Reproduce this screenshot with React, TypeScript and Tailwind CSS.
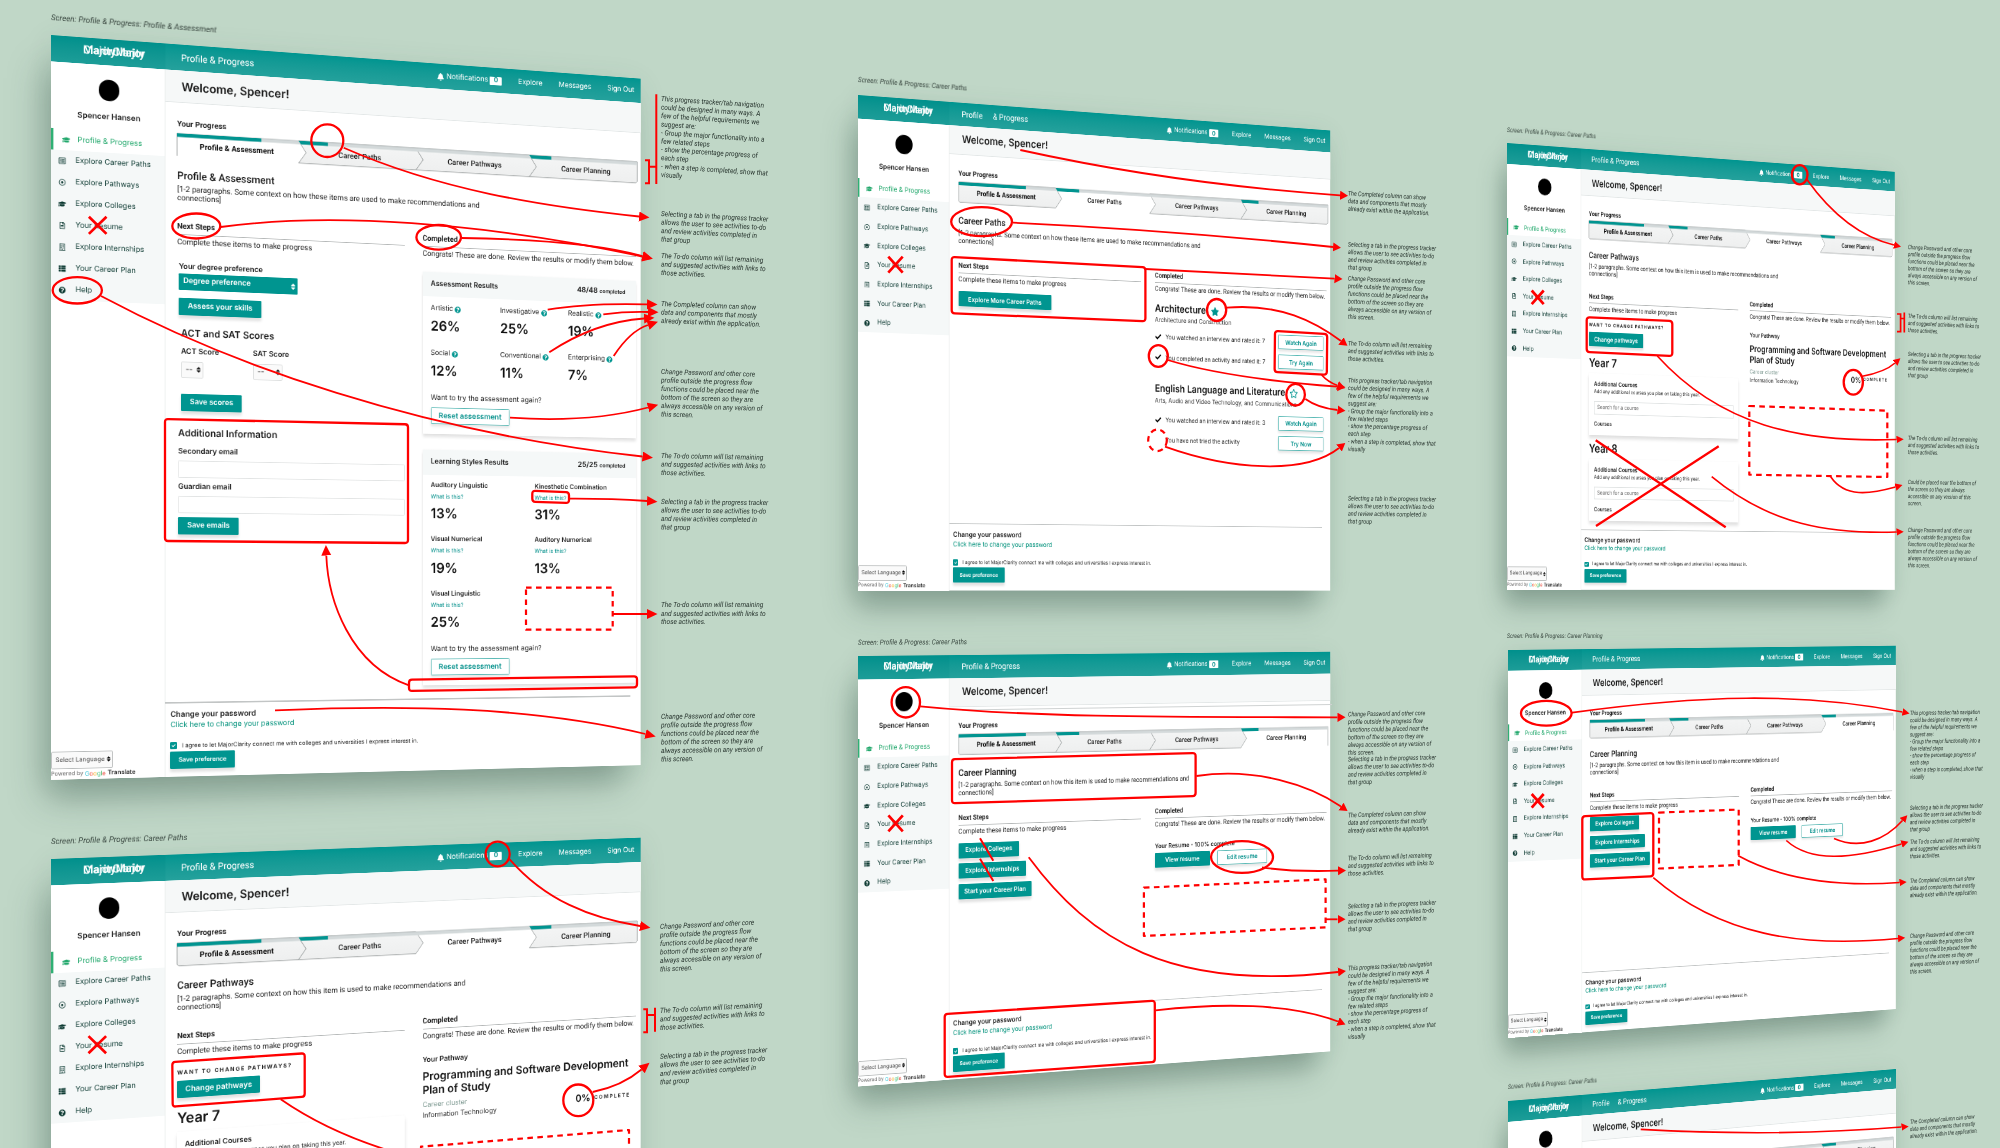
import React from "react";
import {
  FaBell,
  FaCheck,
  FaGraduationCap,
  FaQuestionCircle,
  FaRegBuilding,
  FaRegDotCircle,
  FaRegFileAlt,
  FaRegListAlt,
  FaRegStar,
  FaSort,
  FaStar,
  FaThList,
} from "react-icons/fa";

/* ---------- small building blocks ---------- */

type Kids = { children?: React.ReactNode };

function Solid({ children, className = "" }: Kids & { className?: string }) {
  return (
    <div
      className={
        "flex h-[17.4px] shrink-0 items-center justify-center rounded-[1px] bg-[#009590] pt-[0.5px] font-semibold whitespace-nowrap text-white shadow-[0_3px_3px_rgba(0,0,0,0.12)] " +
        className
      }
    >
      {children}
    </div>
  );
}

function Outline({ children, className = "" }: Kids & { className?: string }) {
  return (
    <div
      className={
        "flex h-[17.4px] shrink-0 items-center justify-center rounded-[1px] border border-[#5bbab6] bg-white pt-[0.5px] font-semibold whitespace-nowrap text-[#008f8a] shadow-[0_2px_3px_rgba(0,0,0,0.1)] " +
        className
      }
    >
      {children}
    </div>
  );
}

/* ---------- sidebar ---------- */

const navItems = [
  { label: "Explore Career Paths", Icon: FaRegListAlt },
  { label: "Explore Pathways", Icon: FaRegDotCircle },
  { label: "Explore Colleges", Icon: FaGraduationCap },
  { label: "Your Resume", Icon: FaRegFileAlt },
  { label: "Explore Internships", Icon: FaRegBuilding },
  { label: "Your Career Plan", Icon: FaThList },
  { label: "Help", Icon: FaQuestionCircle },
];

function Sidebar({ short }: { short?: boolean }) {
  return (
    <div className="flex w-[116px] shrink-0 flex-col border-r border-[#e9eceb] bg-white">
      <div className="flex h-[66.5px] flex-col items-center pt-[15px] pl-[1.5px]">
        <div className="h-[21.4px] w-[21.4px] rounded-full bg-black" />
        <div className="mt-[11.5px] text-[8px] leading-[10px] font-semibold text-[#1a1a1a]">Spencer Hansen</div>
      </div>
      <div className="flex h-[21.6px] items-center border-l-[2.4px] border-[#2fb074] pt-[1px] pl-[8.4px] text-[#22a86c]">
        <FaGraduationCap className="h-[8px] w-[8.6px]" />
        <span className="ml-[7.2px] text-[7.75px] leading-[10px]">Profile &amp; Progress</span>
      </div>
      <div className="bg-[#f5f8f8]">
        {navItems.map(({ label, Icon }) => (
          <div key={label} className="flex h-[21.55px] items-center pt-[0.8px] pl-[7.4px] text-[#0d3a32]">
            <Icon className="h-[7px] w-[8px]" />
            <span className="ml-[9px] text-[7.7px] leading-[10px] whitespace-nowrap">{label}</span>
          </div>
        ))}
      </div>
      {!short && (
        <>
          <div className="grow" />
          <div className="flex h-[17.6px] w-[62px] items-center justify-between rounded-[1.5px] border border-[#b9bcbc] bg-[#fafafa] pr-[1.5px] pl-[3.5px] text-[6.3px] whitespace-nowrap text-[#444]">
            Select Language
            <FaSort className="h-[7px] w-[4px] text-black" />
          </div>
          <div className="flex h-[11px] items-center text-[5.8px] whitespace-nowrap text-[#666]">
            Powered by
            <span className="ml-[1.6px] flex text-[6.2px]">
              <span className="text-[#35c5d8]">G</span>
              <span className="text-[#f0503c]">o</span>
              <span className="text-[#f7b529]">o</span>
              <span className="text-[#4bc78a]">g</span>
              <span className="text-[#34a853]">l</span>
              <span className="text-[#ea4335]">e</span>
            </span>
            <span className="ml-[2px] text-[6.3px] font-semibold text-[#333]">Translate</span>
          </div>
        </>
      )}
    </div>
  );
}

/* ---------- header ---------- */

function Header({ spaced }: { spaced?: boolean }) {
  return (
    <div className="flex h-[26px] shrink-0 text-white">
      <div className="grid w-[116px] place-items-center bg-linear-to-b from-[#00908c] to-[#1c9d98] pl-[11px]">
        <span className="col-start-1 row-start-1 font-['Roboto'] text-[11.5px] leading-none font-medium">
          MajorClarity
        </span>
        <span className="col-start-1 row-start-1 font-['Roboto'] text-[11.5px] leading-none font-medium">
          ClarityMajor
        </span>
      </div>
      <div className="flex grow items-center justify-between bg-linear-to-b from-[#009590] to-[#24a19c] pt-[1.5px] pr-[7.5px] pl-[16px]">
        <div className={"flex font-['Roboto'] text-[9.6px] " + (spaced ? "gap-[13px]" : "gap-[2.4px]")}>
          <span>Profile</span>
          <span>&amp; Progress</span>
        </div>
        <div className="flex items-center text-[7.8px]">
          <FaBell className="mr-[3px] h-[8px] w-[7.4px]" />
          Notifications
          <span className="ml-[2px] flex h-[9px] w-[13.5px] items-center justify-center rounded-[1px] bg-white text-[7.5px] font-bold text-[#008f8a]">
            0
          </span>
          <span className="ml-[18.5px]">Explore</span>
          <span className="ml-[18.5px]">Messages</span>
          <span className="ml-[18.5px]">Sign Out</span>
        </div>
      </div>
    </div>
  );
}

/* ---------- progress tabs ---------- */

const tabs = [
  { label: "Profile & Assessment", done: 88 },
  { label: "Career Paths", done: 31.5 },
  { label: "Career Pathways", done: 0 },
  { label: "Career Planning", done: 25 },
];

function Tabs({ active }: { active: number }) {
  const edge = [0, 127.5, 254.7, 381.8, 506.5];
  return (
    <div className="relative h-[23px] w-[506.5px]">
      <svg className="absolute inset-0 h-[23px] w-[506.5px] overflow-visible" viewBox="0 0 506.5 23">
        <defs>
          <linearGradient id="tabfill" x1="0" y1="0" x2="0" y2="1">
            <stop offset="0" stopColor="#f4f5f5" />
            <stop offset="1" stopColor="#eeefef" />
          </linearGradient>
        </defs>
        {tabs.map((t, i) => {
          const l = edge[i];
          const r = edge[i + 1];
          const right = i < 3 ? `L${r} 0 L${r + 8} 12 L${r} 23` : `L${r} 0 L${r} 21.5 L${r - 1.5} 23`;
          const left = i > 0 ? `L${l} 23 L${l + 8} 12 L${l} 0` : `L${l + 1.5} 23 L${l} 21.5 L${l} 0`;
          return i === active ? null : (
            <path key={t.label} d={`M${l} 0 ${right} ${left}Z`} fill="url(#tabfill)" stroke="#a3a7a7" strokeWidth="0.8" />
          );
        })}
        {active === 0 && <path d="M0 0V23" stroke="#a3a7a7" strokeWidth="0.8" />}
        {active === 3 && <path d="M506.5 0V23" stroke="#a3a7a7" strokeWidth="0.8" />}
        <path d="M0 0H506.5V3.5H0Z" fill="#d3d9da" />
        <path d="M0 0H506.5" stroke="#b4b9b9" strokeWidth="0.6" />
        {tabs.map((t, i) =>
          t.done ? (
            <path
              key={t.label}
              d={`M${edge[i]} 0 H${edge[i] + t.done} V3.6 H${edge[i] + (i ? 2.4 : 0)}Z`}
              fill="#019490"
            />
          ) : null,
        )}
      </svg>
      <div className="relative flex h-[23px] pt-[4px] font-['Roboto'] text-[8px] text-[#222]">
        {tabs.map((t, i) => (
          <div
            key={t.label}
            className={
              "flex w-[127.3px] items-center justify-center " +
              (i === 0 ? "pr-[2px] font-bold text-[#0a0a0a]" : "pl-[7px] font-medium")
            }
          >
            {t.label}
          </div>
        ))}
      </div>
    </div>
  );
}

/* ---------- columns content ---------- */

function SectionHead({ title, text }: { title: string; text: string }) {
  return (
    <div className="font-['Roboto'] text-[8px] leading-[10px] whitespace-nowrap">
      <div className="font-bold text-[#1a1a1a]">{title}</div>
      <div className="mt-[2.2px] h-[1px] bg-[#b5b8b8]" />
      <div className="mt-[2.8px] text-[#242424]">{text}</div>
    </div>
  );
}

function Field() {
  return <div className="h-[17px] rounded-[1px] border border-[#e2e4e4] bg-white" />;
}

function AssessmentLeft() {
  return (
    <div className="pl-[1px] text-[#1a1a1a]">
      <div className="mt-[15px] pl-[0.7px] text-[7.7px] leading-[10px] font-semibold">Your degree preference</div>
      <div className="mt-[1px] ml-[0.7px] flex h-[17px] w-[124.5px] items-center justify-between rounded-[1px] bg-[#009590] pr-[2px] pl-[4.6px] text-[7.8px] font-semibold text-white">
        Degree preference
        <FaSort className="h-[8px] w-[5px]" />
      </div>
      <Solid className="mt-[8.2px] ml-[0.7px] w-[86px] text-[7.8px]">Assess your skills</Solid>
      <div className="pl-[3px]">
        <div className="mt-[12px] text-[9.8px] leading-[12px] font-semibold">ACT and SAT Scores</div>
        <div className="mt-[9px] flex text-[7.7px] leading-[10px] font-semibold">
          <span className="w-[75px]">ACT Score</span>
          <span>SAT Score</span>
        </div>
        <div className="mt-[3.7px] flex">
          <div className="flex h-[17.4px] w-[23px] items-center justify-between rounded-[1.5px] border border-[#dcdede] bg-[#fafafa] pr-[1.6px] pl-[4px] text-[8px]">
            --
            <FaSort className="h-[8px] w-[4.6px]" />
          </div>
          <div className="ml-[52px] flex h-[17.4px] w-[31px] items-center justify-between rounded-[1.5px] border border-[#dcdede] bg-[#fafafa] pr-[1.6px] pl-[4px] text-[8px]">
            --
            <FaSort className="h-[8px] w-[4.6px]" />
          </div>
        </div>
        <Solid className="mt-[15.7px] w-[63.5px] text-[7.7px]">Save scores</Solid>
      </div>
      <div className="mt-[16.2px] text-[9.7px] leading-[12px] font-semibold">Additional Information</div>
      <div className="mt-[8.8px] text-[7.7px] leading-[10px] font-semibold">Secondary email</div>
      <div className="mt-[4px]">
        <Field />
      </div>
      <div className="mt-[5.4px] text-[7.7px] leading-[10px] font-semibold">Guardian email</div>
      <div className="mt-[3.6px]">
        <Field />
      </div>
      <Solid className="mt-[4.4px] w-[63px] text-[7.7px]">Save emails</Solid>
    </div>
  );
}

function ResultCard({ title, count, children, className = "" }: Kids & { title: string; count: string; className?: string }) {
  return (
    <div className={"bg-white shadow-[0_3px_3px_rgba(0,0,0,0.11),0_0_2px_rgba(0,0,0,0.05)] " + className}>
      <div className="flex h-[26px] items-center justify-between bg-[#f5f8f8] pr-[12px] pl-[9px] text-[#1a1a1a]">
        <span className="text-[7.7px] font-semibold">{title}</span>
        <span className="text-[8px] font-semibold">
          {count} <span className="text-[5.9px]">completed</span>
        </span>
      </div>
      <div className="pl-[9px]">{children}</div>
    </div>
  );
}

const interests = [
  ["Artistic", "26%"],
  ["Investigative", "25%"],
  ["Realistic", "19%"],
  ["Social", "12%"],
  ["Conventional", "11%"],
  ["Enterprising", "7%"],
];

const styles = [
  ["Auditory Linguistic", "13%"],
  ["Kinesthetic Combination", "31%"],
  ["Visual Numerical", "19%"],
  ["Auditory Numerical", "13%"],
  ["Visual Linguistic", "25%"],
];

function AssessmentRight() {
  return (
    <div>
      <ResultCard title="Assessment Results" count="48/48" className="mt-[13px] h-[170.8px]">
        <div className="grid grid-cols-[77.5px_77.5px_77.5px] gap-y-[16px] pt-[7.9px]">
          {interests.map(([name, value]) => (
            <div key={name}>
              <div className="flex items-center gap-[2px] text-[7.5px] leading-[10px] text-[#222]">
                {name}
                <FaQuestionCircle className="h-[7px] w-[7px] text-[#009590]" />
              </div>
              <div className="mt-[5.3px] text-[14.5px] leading-[16px] font-semibold text-[#101010]">{value}</div>
            </div>
          ))}
        </div>
        <div className="mt-[16px] text-[7.7px] leading-[10px] text-[#222]">Want to try the assessment again?</div>
        <Outline className="mt-[4.4px] w-[88px] text-[8px]">Reset assessment</Outline>
      </ResultCard>
      <ResultCard title="Learning Styles Results" count="25/25" className="mt-[17px] h-[248px]">
        <div className="grid grid-cols-[116.6px_116px] gap-y-[14.3px] pt-[6.2px]">
          {styles.map(([name, value]) => (
            <div key={name} className="whitespace-nowrap">
              <div className="text-[7px] leading-[10px] font-semibold text-[#1f1f1f]">{name}</div>
              <div className="mt-[2.9px] text-[6.1px] leading-[8px] text-[#008f8a]">What is this?</div>
              <div className="mt-[6px] text-[14.5px] leading-[16px] font-semibold text-[#101010]">{value}</div>
            </div>
          ))}
        </div>
        <div className="mt-[16px] text-[7.7px] leading-[10px] text-[#222]">Want to try the assessment again?</div>
        <Outline className="mt-[4.2px] w-[88px] text-[8px]">Reset assessment</Outline>
      </ResultCard>
    </div>
  );
}

function Activity({ done, text, action }: { done: boolean; text: string; action: string }) {
  return (
    <div className="flex h-[24px] items-center pr-[4px] text-[7.4px] text-[#181818]">
      <span className="w-[14.5px]">{done && <FaCheck className="h-[8px] w-[9px] text-black" />}</span>
      <span className="grow whitespace-nowrap">{text}</span>
      <Outline className="w-[65.5px] text-[7.4px]">{action}</Outline>
    </div>
  );
}

function PathsRight() {
  return (
    <div className="whitespace-nowrap">
      <div className="mt-[10.5px] flex items-center text-[11.8px] leading-[14px] font-semibold text-[#151515]">
        Architecture
        <FaStar className="ml-[6.5px] h-[10px] w-[12.5px] text-[#009590]" />
      </div>
      <div className="mt-[0.6px] text-[7.5px] leading-[10px] text-[#2a2a2a]">Architecture and Construction</div>
      <div className="mt-[3px]">
        <Activity done text="You watched an interview and rated it: 7" action="Watch Again" />
        <Activity done text="You completed an activity and rated it: 7" action="Try Again" />
      </div>
      <div className="mt-[18.6px] flex items-center text-[11.8px] leading-[14px] font-semibold text-[#151515]">
        English Language and Literature
        <FaRegStar className="ml-[6px] h-[10.5px] w-[12.5px] text-[#009590]" />
      </div>
      <div className="mt-[1.4px] text-[7.5px] leading-[10px] text-[#2a2a2a]">Arts, Audio and Video Technology, and Communications</div>
      <div className="mt-[5px]">
        <Activity done text="You watched an interview and rated it: 3" action="Watch Again" />
        <Activity done={false} text="You have not tried the activity" action="Try Now" />
      </div>
    </div>
  );
}

function YearCard({ year }: { year: string }) {
  return (
    <div>
      <div className="text-[14.8px] leading-[18px] font-semibold text-[#151515]">{year}</div>
      <div className="mt-[4px] h-[78px] bg-white px-[8px] pt-[9px] shadow-[0_4px_4px_rgba(0,0,0,0.12),0_0_2px_rgba(0,0,0,0.04)]">
        <div className="text-[7.6px] leading-[10px] font-semibold text-[#1a1a1a]">Additional Courses</div>
        <div className="text-[6.5px] leading-[8px] whitespace-nowrap text-[#222]">
          Add any additional courses you plan on taking this year.
        </div>
        <div className="mt-[8px] flex h-[16.5px] items-center border border-[#e0e3e3] pl-[4px] text-[7.2px] text-[#606060]">
          Search for a course
        </div>
        <div className="mt-[7.5px] text-[7px] leading-[10px] font-semibold text-[#1a1a1a]">Courses</div>
      </div>
    </div>
  );
}

function PathwaysLeft() {
  return (
    <div>
      <div className="mt-[11.5px] text-[5.8px] leading-[8px] font-bold tracking-[1.2px] whitespace-nowrap text-[#222]">
        WANT TO CHANGE PATHWAYS?
      </div>
      <Solid className="mt-[4.3px] w-[86.6px] text-[8px]">Change pathways</Solid>
      <div className="mt-[12.4px] flex flex-col gap-[7.6px]">
        <YearCard year="Year 7" />
        <YearCard year="Year 8" />
      </div>
    </div>
  );
}

function PathwaysRight() {
  return (
    <div className="whitespace-nowrap">
      <div className="mt-[14.8px] text-[7.6px] leading-[10px] font-semibold text-[#1a1a1a]">Your Pathway</div>
      <div className="mt-[4.2px] text-[11.8px] leading-[14.4px] font-semibold text-[#151515]">
        Programming and Software Development
        <br />
        Plan of Study
      </div>
      <div className="mt-[3.6px] flex items-center justify-between pr-[6px]">
        <div className="text-[7.4px] leading-[10.8px]">
          <div className="text-[#7c9890]">Career cluster</div>
          <div className="text-[#2a2a2a]">Information Technology</div>
        </div>
        <div className="flex items-center text-[5.8px] font-bold tracking-[1.3px] text-[#333]">
          <span className="mr-[4px] text-[10.5px] font-semibold tracking-normal text-[#151515]">0%</span>
          COMPLETE
        </div>
      </div>
    </div>
  );
}

function PlanningLeft() {
  return (
    <div className="mt-[6.6px] flex flex-col gap-[6px] text-[7.6px]">
      <Solid className="w-[79px]">Explore Colleges</Solid>
      <Solid className="w-[88.3px]">Explore Internships</Solid>
      <Solid className="w-[95.6px]">Start your Career Plan</Solid>
    </div>
  );
}

function PlanningRight() {
  return (
    <div>
      <div className="mt-[14px] text-[7.5px] leading-[10px] font-semibold text-[#1a1a1a]">Your Resume - 100% complete</div>
      <div className="mt-[3px] flex gap-[10.4px] text-[7.6px]">
        <Solid className="w-[76px]">View resume</Solid>
        <Outline className="w-[71px]">Edit resume</Outline>
      </div>
    </div>
  );
}

/* ---------- board ---------- */

const pages = {
  assessment: { tab: 0, title: "Profile & Assessment", these: "these items are", Left: AssessmentLeft, Right: AssessmentRight },
  paths: {
    tab: 1,
    title: "Career Paths",
    these: "these items are",
    Left: () => <Solid className="mt-[7px] w-[121.6px] text-[7.5px]">Explore More Career Paths</Solid>,
    Right: PathsRight,
  },
  pathways: { tab: 2, title: "Career Pathways", these: "this item is", Left: PathwaysLeft, Right: PathwaysRight },
  planning: { tab: 3, title: "Career Planning", these: "this item is", Left: PlanningLeft, Right: PlanningRight },
};

function Body({ page }: { page: keyof typeof pages }) {
  const { title, these, Left, Right } = pages[page];
  return (
    <>
      <div className="mt-[15px] font-['Roboto'] text-[10.6px] leading-[12px] font-medium text-[#1a1a1a]">{title}</div>
      <div className="mt-[3.2px] font-['Roboto'] text-[8px] leading-[9.1px] whitespace-nowrap text-[#242424]">
        [1-2 paragraphs. Some context on how {these} used to make recommendations and
        <br />
        connections]
      </div>
      <div className="mt-[19.3px] grid grid-cols-[242.5px_242.5px] gap-x-[19.5px]">
        <div>
          <SectionHead title="Next Steps" text="Complete these items to make progress" />
          <Left />
        </div>
        <div>
          <SectionHead title="Completed" text="Congrats! These are done. Review the results or modify them below." />
          <Right />
        </div>
      </div>
    </>
  );
}

function Footer() {
  return (
    <div className="h-[76px] shrink-0 pr-[12px]">
      <div className="h-[1px] bg-[#c2c5c5]" />
      <div className="pl-[5px] whitespace-nowrap">
        <div className="mt-[7px] text-[8px] leading-[10px] font-semibold text-[#1a1a1a]">Change your password</div>
        <div className="mt-[1.3px] text-[7.65px] leading-[10px] text-[#00917b]">Click here to change your password</div>
        <div className="mt-[10.9px] flex items-center text-[6.05px] leading-[8px] text-[#222]">
          <span className="mr-[5.4px] flex h-[6.6px] w-[6.6px] items-center justify-center rounded-[1px] bg-[#009590]">
            <FaCheck className="h-[4px] w-[4px] text-white" />
          </span>
          I agree to let MajorClarity connect me with colleges and universities I express interest in.
        </div>
        <Solid className="mt-[1.8px] w-[67px] text-[6.3px]">Save preference</Solid>
      </div>
    </div>
  );
}

function Board({
  page,
  spaced,
  short,
  headOnly,
  place,
  size,
}: {
  page: keyof typeof pages;
  spaced?: boolean;
  short?: boolean;
  headOnly?: boolean;
  place: string;
  size: string;
}) {
  return (
    <div className={"absolute origin-top-left will-change-transform " + place}>
      <div
        className={
          "flex w-[638.5px] flex-col bg-white shadow-[-14px_26px_34px_-8px_rgba(40,70,58,0.36),0_6px_30px_rgba(60,100,80,0.12)] " +
          size
        }
      >
        <Header spaced={spaced} />
        <div className="flex min-h-0 grow">
          <Sidebar short={short} />
          <div className="flex min-w-0 grow flex-col">
            <div className="flex h-[33px] shrink-0 items-center border-b border-[#e3e7e7] bg-[#f6f8f8] pt-[2px] pl-[16.5px] text-[12px] font-semibold text-[#181818]">
              Welcome, Spencer!
            </div>
            <div className="min-h-0 grow pt-[17.6px] pl-[12px]">
              <div className="font-['Roboto'] text-[8px] leading-[10px] font-bold text-[#222]">Your Progress</div>
              <div className="mt-[3.4px]">
                <Tabs active={pages[page].tab} />
              </div>
              {!headOnly && <Body page={page} />}
            </div>
            {!short && <Footer />}
          </div>
        </div>
      </div>
    </div>
  );
}

/* ---------- notes beside the boards ---------- */

const texts = {
  tracker: [
    "This progress tracker/tab navigation",
    "could be designed in many ways. A",
    "few of the helpful requirements we",
    "suggest are:",
    "- Group the major functionality into a",
    "few related steps",
    "- show the percentage progress of",
    "each step",
    "- when a step is completed, show that",
    "visually",
  ],
  select: [
    "Selecting a tab in the progress tracker",
    "allows the user to see activities to-do",
    "and review activities completed in",
    "that group",
  ],
  todo: ["The To-do column will list remaining", "and suggested activities with links to", "those activities."],
  completed: ["The Completed column can show", "data and components that mostly", "already exist within the application."],
  password: [
    "Change Password and other core",
    "profile outside the progress flow",
    "functions could be placed near the",
    "bottom of the screen so they are",
    "always accessible on any version of",
    "this screen.",
  ],
  bottom: ["Could be placed near the bottom of", "the screen so they are always", "accessible on any version of this", "screen."],
};

type NoteRow = [keyof typeof texts, number, number];

const noteColumns: { x: number; sx: number; sy: number; rows: NoteRow[] }[] = [
  {
    x: 661.3,
    sx: 0.915,
    sy: 1,
    rows: [
      ["tracker", 99.3, 0.066],
      ["select", 214.3, 0.052],
      ["todo", 256.3, 0.045],
      ["completed", 304, 0.038],
      ["password", 371.7, 0.028],
      ["todo", 455.7, 0.018],
      ["select", 502, 0.011],
      ["todo", 605, 0],
      ["password", 717.3, -0.015],
    ],
  },
  {
    x: 660,
    sx: 0.915,
    sy: 1,
    rows: [
      ["password", 926.7, -0.046],
      ["todo", 1010.7, -0.055],
      ["select", 1057.3, -0.064],
    ],
  },
  {
    x: 1347.8,
    sx: 0.75,
    sy: 0.903,
    rows: [
      ["completed", 193.7, 0.056],
      ["select", 244.3, 0.05],
      ["password", 278.3, 0.044],
      ["todo", 343.3, 0.035],
      ["tracker", 381, 0.028],
      ["select", 498.3, 0.012],
      ["password", 715, -0.017],
      ["select", 759.7, -0.023],
      ["completed", 815.3, -0.031],
      ["todo", 858.7, -0.037],
      ["select", 906.3, -0.044],
      ["tracker", 969, -0.053],
    ],
  },
  {
    x: 1908,
    sx: 0.622,
    sy: 0.83,
    rows: [
      ["password", 247.3, 0.058],
      ["todo", 316, 0.048],
      ["select", 354.7, 0.04],
      ["todo", 438, 0.027],
      ["bottom", 482, 0.02],
      ["password", 530.3, 0.012],
    ],
  },
  {
    x: 1910,
    sx: 0.622,
    sy: 0.84,
    rows: [
      ["tracker", 714, -0.016],
      ["select", 808.2, -0.034],
      ["todo", 842.2, -0.038],
      ["completed", 881.6, -0.044],
      ["password", 936.5, -0.054],
      ["completed", 1123, -0.085],
    ],
  },
];

function Notes() {
  return (
    <>
      {noteColumns.map((c) =>
        c.rows.map(([key, y, slope]) => (
          <div
            key={`${c.x}-${y}`}
            className="absolute origin-top-left font-['Roboto'] text-[14.4px] leading-[16.9px] whitespace-nowrap text-[#26332d] italic"
            style={{
              left: c.x,
              top: y - 4.2 * c.sy,
              transform: `matrix(${c.sx / 2}, ${(slope * c.sx) / 2}, 0, ${c.sy / 2}, 0, 0)`,
            }}
          >
            {texts[key].map((line) => (
              <div key={line}>{line}</div>
            ))}
          </div>
        )),
      )}
    </>
  );
}

const captions: [string, number, number, number, number, number][] = [
  ["Profile & Assessment", 50.7, 16.5, 0.99, 1, 0.076],
  ["Career Paths", 50.7, 840.7, 0.99, 1, -0.03],
  ["Career Paths", 858, 79.3, 0.79, 0.9, 0.079],
  ["Career Paths", 858, 642.7, 0.79, 0.9, -0.005],
  ["Career Paths", 1507, 130, 0.645, 0.81, 0.072],
  ["Career Planning", 1507, 635.8, 0.645, 0.81, -0.002],
  ["Career Paths", 1508, 1087.5, 0.645, 0.81, -0.075],
];

function Captions() {
  return (
    <>
      {captions.map(([name, x, y, sx, sy, slope]) => (
        <div
          key={`${x}-${y}`}
          className="absolute origin-top-left font-['Roboto'] text-[16px] leading-[20px] whitespace-nowrap text-[#36443d] italic"
          style={{ left: x, top: y - 5 * sy, transform: `matrix(${sx / 2}, ${(slope * sx) / 2}, 0, ${sy / 2}, 0, 0)` }}
        >
          Screen: Profile &amp; Progress: {name}
        </div>
      ))}
    </>
  );
}

/* ---------- red markup ---------- */

const arrowsLarge = [
  "M343.7 147.7C440 190 540 206 639 216.5",
  "M220.7 227C330 212 480 222 642.5 256.5",
  "M461.3 238C530 239 600 244 642.5 256",
  "M547.7 309.7C580 304 615 303.5 647 304.3",
  "M603.3 314.3Q625 311.5 648 312",
  "M549.3 352.3Q595 322 644 318.5",
  "M613.7 356Q630 331 648 325",
  "M510 417.7Q590 423 648 407.5",
  "M101 296C230 365 420 432 642.5 456.5",
  "M409 685.3C350 665 328 600 326.3 555.5",
  "M275 710.3C400 705 530 706 645.5 734",
  "M569 498.7Q610 498.5 647 501",
  "M613 614H647",
  "M509.7 859.3C545 900 590 918 640 926",
  "M592.7 1092Q622 1086 641.5 1069.5",
];

const arrowsMedium = [
  "M1020.3 150C1120 172 1220 187 1340 195.3",
  "M1013 222.7Q1170 230 1333 247",
  "M1145.4 269L1334.5 278.6",
  "M1226.5 307.7C1280 303 1315 322 1341 341",
  "M1321.7 375Q1328 382 1337.5 385.5",
  "M1167.6 360C1220 376 1290 383 1337.5 386.7",
  "M1305.4 399Q1318 408 1337.5 410",
  "M1165 446.7C1230 470 1305 475 1339 448",
  "M920.2 706.3C1040 718 1180 717 1337.5 717.3",
  "M1196.4 776C1255 767 1310 785 1341 806.5",
  "M1028.7 857.3C1090 940 1170 992 1338 972",
  "M1262 867.3Q1290 872 1338 870.7",
  "M1325.6 919.3H1337.5",
  "M1155.6 1010.3C1220 1003 1290 1003 1338 1021.5",
];

const arrowsSmall = [
  "M1806.7 179.3C1830 212 1860 237 1894 245",
  "M1657.3 356C1720 425 1800 443 1896.5 439.5",
  "M1862.3 376.3Q1885 372 1895 363",
  "M1830.7 476.7C1845 498 1870 494 1895.5 487",
  "M1711.7 476.7C1770 525 1830 534 1896.5 532",
  "M1572 712.6C1700 695 1800 692 1902.5 712",
  "M1653.3 877.6C1720 935 1800 948 1898 938.5",
  "M1738.3 855.7C1790 884 1850 886 1899.5 882.5",
  "M1834 838.5C1860 850 1885 840 1902.5 820.5",
  "M1786.3 840.5C1810 862 1850 860 1901.5 844",
  "M1640.7 1129.4Q1780 1137 1901.5 1127",
];

type Corner = [number, number];

const boxes: Corner[][] = [
  [[165, 419], [408, 424.3], [408, 543], [165, 541]],
  [[409, 679.7], [637, 676.3], [637, 687.3], [409, 691]],
  [[532.3, 490.7], [569, 492.3], [569, 503], [532.3, 501.7]],
  [[172.3, 1062], [304.7, 1053.3], [304.7, 1096.7], [172.7, 1106.7]],
  [[951.7, 257], [1145.4, 267.3], [1145.4, 321.3], [951.7, 313.3]],
  [[1275, 331], [1327.2, 334], [1326.8, 374.7], [1274.6, 372]],
  [[952, 759.3], [1195.6, 753], [1195.6, 796], [952, 803.3]],
  [[944.7, 1014], [1154.8, 1000.7], [1154.8, 1062], [944.7, 1077]],
  [[1586.7, 317.3], [1672.3, 321], [1672.3, 356], [1586.7, 352]],
  [[1582.3, 816.3], [1653.3, 813], [1653.3, 876.2], [1582.3, 879.6]],
];

function roundedPath(corners: Corner[], r: number) {
  const toward = (a: Corner, b: Corner) => {
    const len = Math.hypot(b[0] - a[0], b[1] - a[1]);
    return `${a[0] + ((b[0] - a[0]) * r) / len} ${a[1] + ((b[1] - a[1]) * r) / len}`;
  };
  return (
    corners
      .map((c, i) => {
        const prev = corners[(i + corners.length - 1) % corners.length];
        const next = corners[(i + 1) % corners.length];
        return `${i ? "L" : "M"}${toward(c, prev)}Q${c[0]} ${c[1]} ${toward(c, next)}`;
      })
      .join("") + "Z"
  );
}

const dashedBoxes = [
  "M526 587.7H612.7V629.7H526Z",
  "M421 1170V1146.7L629 1130V1170",
  "M1143.9 887.7L1325.6 879.3V927.3L1143.9 936Z",
  "M1749.3 406L1887.3 410.7V477L1749.3 474.7Z",
  "M1659 812.6L1738.7 809.6V865L1659 868.5Z",
];

const rings: [number, number, number, number][] = [
  [327.3, 140.7, 16, 16.3],
  [196.3, 226, 24, 12.5],
  [438.7, 237.3, 22.3, 12.3],
  [77.3, 290.3, 24.6, 13.2],
  [497.7, 854, 12, 12.4],
  [578.3, 1100.3, 15, 15.8],
  [981.6, 221.7, 30.4, 14.5],
  [1216.6, 310, 9.6, 11],
  [1158.3, 356, 9.5, 10.8],
  [1295.6, 394.7, 9.3, 10.8],
  [905.8, 702.3, 14.2, 15.2],
  [1242, 857, 31, 15.8],
  [1799.7, 174.7, 7.8, 9.6],
  [1853.3, 382.3, 9.6, 12.4],
  [1546.3, 713.3, 25.3, 12.4],
];

const crosses: [number, number, number, number][] = [
  [97.7, 225.3, 8.8, 8.6],
  [97.3, 1044.7, 8.8, 8.6],
  [895.5, 264.7, 7.2, 8],
  [895.6, 823.3, 7.2, 8],
  [1537.7, 297.3, 6, 6.8],
  [1537.7, 800.8, 6, 6.8],
];

function Markup() {
  return (
    <svg className="absolute inset-0" width="2000" height="1148" viewBox="0 0 2000 1148" fill="none" stroke="#ff0000">
      <defs>
        <marker id="a1" markerUnits="userSpaceOnUse" markerWidth="12" markerHeight="12" refX="0" refY="5" orient="auto">
          <path d="M0 0L10.5 5L0 10Z" fill="#ff0000" stroke="none" />
        </marker>
        <marker id="a2" markerUnits="userSpaceOnUse" markerWidth="12" markerHeight="12" refX="0" refY="4.6" orient="auto">
          <path d="M0 0L8 4.6L0 9.2Z" fill="#ff0000" stroke="none" />
        </marker>
        <marker id="a3" markerUnits="userSpaceOnUse" markerWidth="12" markerHeight="12" refX="0" refY="3.8" orient="auto">
          <path d="M0 0L7.2 3.8L0 7.6Z" fill="#ff0000" stroke="none" />
        </marker>
      </defs>
      <path d="M962 710L1332 704.5" stroke="#cfd2d2" strokeWidth="1" />
      <g strokeWidth="1.8">
        {arrowsLarge.map((d) => (
          <path key={d} d={d} markerEnd="url(#a1)" />
        ))}
        {arrowsMedium.map((d) => (
          <path key={d} d={d} markerEnd="url(#a2)" />
        ))}
      </g>
      <g strokeWidth="1.6">
        {arrowsSmall.map((d) => (
          <path key={d} d={d} markerEnd="url(#a3)" />
        ))}
        <path d="M280.7 1099.3Q325 1130 384 1149" strokeWidth="1.8" />
      </g>
      <g strokeWidth="2.3">
        {boxes.map((c) => (
          <path key={c.join()} d={roundedPath(c, 3)} />
        ))}
        {rings.map(([x, y, rx, ry]) => (
          <ellipse key={`${x}-${y}`} cx={x} cy={y} rx={rx} ry={ry} />
        ))}
      </g>
      <g strokeWidth="2.2" strokeDasharray="5.6 4.4" strokeLinejoin="round">
        {dashedBoxes.map((d) => (
          <path key={d} d={d} />
        ))}
        <ellipse cx="1157.5" cy="440.3" rx="9.3" ry="10.8" />
      </g>
      <g strokeWidth="2.7">
        {crosses.map(([x, y, w, h]) => (
          <path key={`${x}-${y}`} d={`M${x - w} ${y - h}L${x + w} ${y + h}M${x + w} ${y - h}L${x - w} ${y + h}`} />
        ))}
        <path d="M1595.7 440.3L1725.7 527.3M1718.7 446.3L1596 526" strokeWidth="2.3" />
        <path d="M980 838.3L993.3 860.7M980 858.7L993.3 881" strokeWidth="2" />
      </g>
      <g strokeWidth="2">
        <path d="M656.3 94.3V184M645 160.3H649V183.3H645M649 166.7H656" />
        <path d="M643.3 1009.3H647V1032.3H643.3M647 1015H655M655 1007.7V1031.7" />
        <path d="M1897 314H1900.6V331.7H1897M1900.6 318.5H1904.3M1904.3 312.5V332.5" strokeWidth="1.7" />
      </g>
    </svg>
  );
}

export default function App() {
  return (
    <div className="relative h-[1148px] w-[2000px] overflow-hidden bg-[#c0d7c7] font-['Inter',sans-serif] [text-rendering:geometricPrecision]">
      <Board
        page="assessment"
        size="h-[745px] [zoom:1.25]"
        place="left-[51px] top-[34.6px] [transform:matrix3d(0.8016,0.05936,0,0.0001064,0,0.8,0,0,0,0,1,0,0,0,0,1)]"
      />
      <Board
        page="pathways"
        short
        size="h-[400px] [zoom:1.25]"
        place="left-[50.7px] top-[858.9px] [transform:matrix3d(0.8016,-0.02904,0,0.0001064,0,0.8,0,0,0,0,1,0,0,0,0,1)]"
      />
      <Board
        page="paths"
        spaced
        size="h-[553.6px] [zoom:1.1]"
        place="left-[858.3px] top-[94.5px] [transform:matrix3d(0.72455,0.05445,0,0.0001096,0,0.81364,0,0,0,0,1,0,0,0,0,1)]"
      />
      <Board
        page="planning"
        size="h-[481px] [zoom:1.1]"
        place="left-[858px] top-[656.3px] [transform:matrix3d(0.72455,-0.00659,0,0.0001096,0,0.81364,0,0,0,0,1,0,0,0,0,1)]"
      />
      <Board
        page="pathways"
        size="h-[555px]"
        place="left-[1507.2px] top-[143.2px] [transform:matrix3d(0.6485,0.0482,0,0.0001079,0,0.805,0,0,0,0,1,0,0,0,0,1)]"
      />
      <Board
        page="planning"
        size="h-[485px]"
        place="left-[1507.6px] top-[650.4px] [transform:matrix3d(0.6478,-0.0072,0,0.000106,0,0.8,0,0,0,0,1,0,0,0,0,1)]"
      />
      <Board
        page="paths"
        spaced
        short
        headOnly
        size="h-[220px]"
        place="left-[1508px] top-[1100.5px] [transform:matrix3d(0.6485,-0.0535,0,0.000107,0,0.8065,0,0,0,0,1,0,0,0,0,1)]"
      />
      <Captions />
      <Notes />
      <Markup />
    </div>
  );
}
